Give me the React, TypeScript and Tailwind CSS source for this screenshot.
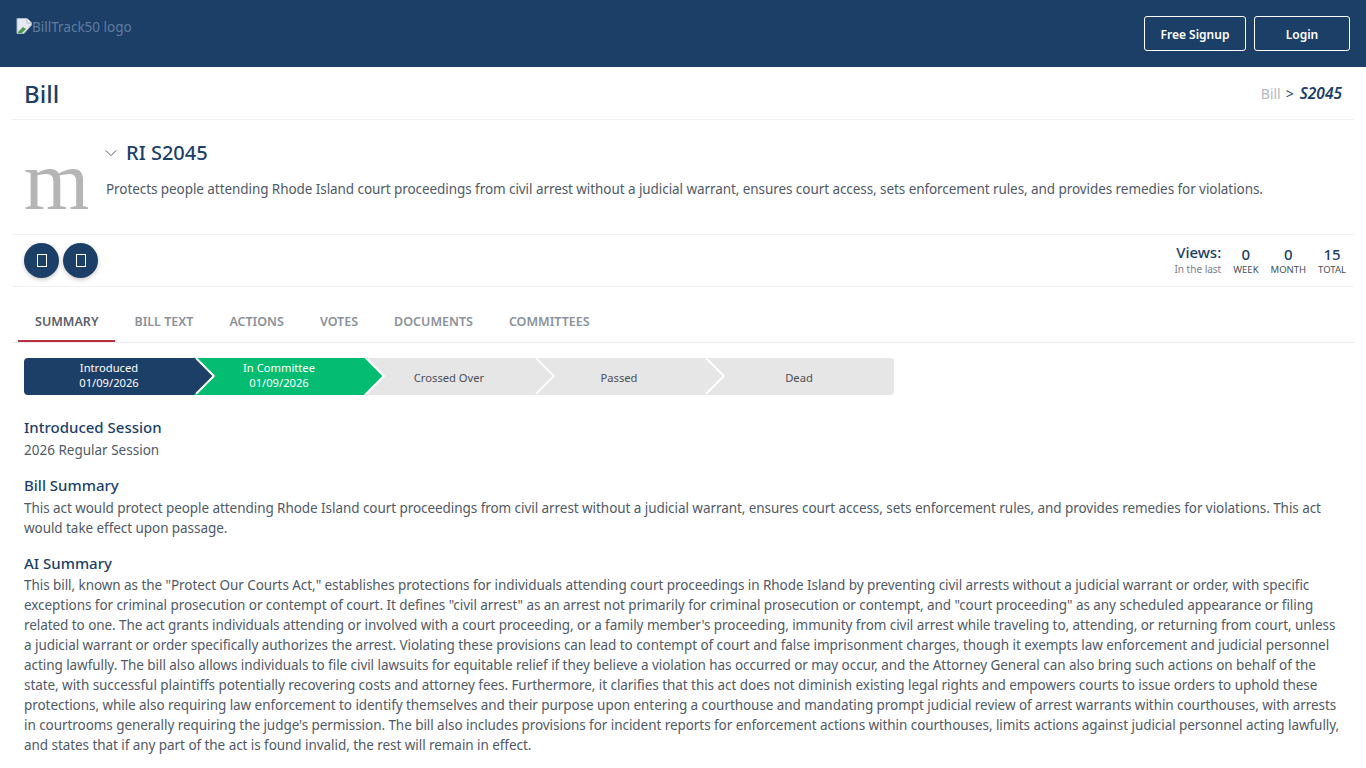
import React from "react";

const NAVY = "text-[#1c3f68]";

const tabs = ["Summary", "Bill Text", "Actions", "Votes", "Documents", "Committees"];

const steps = [
  { label: "Introduced", date: "01/09/2026", cls: "bg-[#1c3f68] text-white", arrow: "bg-[#1c3f68]" },
  { label: "In Committee", date: "01/09/2026", cls: "bg-[#04bd72] text-white", arrow: "bg-[#04bd72]" },
  { label: "Crossed Over", cls: "bg-[#e6e6e6] text-[#4a4f57]", arrow: "bg-[#e6e6e6]" },
  { label: "Passed", cls: "bg-[#e6e6e6] text-[#4a4f57]", arrow: "bg-[#e6e6e6]" },
  { label: "Dead", cls: "bg-[#e6e6e6] text-[#4a4f57] w-[190px] rounded-r-sm" },
];

const BrokenImage = () => (
  <svg width="16" height="16" viewBox="0 0 16 16" className="shrink-0">
    <path d="M1 0.5H11L15.5 5V7L8 15.5H1Z" fill="#e4e9f4" stroke="#a9b4c4" />
    <path d="M2 14L7 9L10 11L6 15H2Z" fill="#4f9a4a" />
    <path d="M11 0.5V5H15.5" fill="#fff" stroke="#a9b4c4" />
  </svg>
);

const Tofu = () => <span className="block w-[10px] h-[13px] border border-white" />;

const Stat = ({ value, label }: { value: string; label: string }) => (
  <div className="flex flex-col items-center">
    <span className={`text-[15px] leading-[18px] font-medium ${NAVY}`}>{value}</span>
    <span className="text-[9.5px] leading-[12px] mt-[1px] text-[#4a4f57]">{label}</span>
  </div>
);

export default function App() {
  return (
    <div className="min-h-screen bg-white text-[#505a67] font-['Noto_Sans',sans-serif] overflow-hidden">
      <header className="h-[67px] bg-[#1c3f68] flex justify-between pl-4 pr-4">
        <div className="flex items-start pt-[18px] gap-0 text-[13.5px] leading-[18px] text-[#5f7c9e]">
          <BrokenImage />
          <span>BillTrack50 logo</span>
        </div>
        <div className="flex items-start gap-2 pt-4">
          <button className="w-[102px] h-[35px] pt-[3px] border border-white rounded-[3px] text-white text-[12px] font-semibold">
            Free Signup
          </button>
          <button className="w-[96px] h-[35px] pt-[3px] border border-white rounded-[3px] text-white text-[12px] font-semibold">
            Login
          </button>
        </div>
      </header>

      <main className="px-3">
        <div className="h-[53px] border-b border-[#f0f0f0] flex items-center justify-between px-3">
          <h1 className={`text-[24px] font-medium pt-[2px] ${NAVY}`}>Bill</h1>
          <div className="text-[14px] flex items-baseline pt-[2px]">
            <span className="text-[#b4b8bd]">Bill</span>
            <span className={`ml-[5px] mr-[6px] ${NAVY}`}>&gt;</span>
            <span className={`italic font-semibold text-[15.5px] ${NAVY}`}>S2045</span>
          </div>
        </div>

        <div className="h-[115px] border-b border-[#f0f0f0] flex px-3">
          <div className="w-[80px] shrink-0 pt-[11px] font-['Liberation_Serif',serif] text-[84px] leading-[100px] text-[#b5b5b5]">
            m
          </div>
          <div className="pt-[18px]">
            <div className="flex items-center gap-[8px] h-[30px]">
              <svg width="14" height="14" viewBox="0 0 16 16" fill="none" stroke="#4a5563" strokeWidth="1.1">
                <path d="M2 5l6 6 6-6" />
              </svg>
              <h2 className={`text-[20px] font-medium ${NAVY}`}>RI S2045</h2>
            </div>
            <p className="text-[13.5px] leading-5 mt-[11px] ml-[2px] tracking-[-0.07px]">
              Protects people attending Rhode Island court proceedings from civil arrest without a judicial warrant, ensures court access, sets enforcement rules, and provides remedies for violations.
            </p>
          </div>
        </div>

        <div className="h-[52px] border-b border-[#f0f0f0] flex items-center justify-between pl-3 pr-2">
          <div className="flex gap-[4px]">
            {[0, 1].map((i) => (
              <div
                key={i}
                className="w-[35px] h-[35px] rounded-full bg-[#1c3f68] flex items-center justify-center shadow-[0_2px_4px_rgba(0,0,0,0.2)]"
              >
                <Tofu />
              </div>
            ))}
          </div>
          <div className="flex items-center gap-[12px]">
            <div className="flex flex-col items-end -mt-[3px]">
              <span className={`text-[15px] leading-[18px] font-medium ${NAVY}`}>Views:</span>
              <span className="text-[10px] leading-[12px] mt-[2px] text-[#7a8088]">In the last</span>
            </div>
            <Stat value="0" label="WEEK" />
            <Stat value="0" label="MONTH" />
            <Stat value="15" label="TOTAL" />
          </div>
        </div>

        <nav className="h-[56px] border-b border-[#e9ecef] flex items-end pl-[6px] gap-[2px]">
          {tabs.map((t, i) => (
            <div
              key={t}
              className={`h-[46px] px-[17px] pt-[17px] pb-0 uppercase text-[12.5px] leading-[18px] font-semibold border-b-2 ${
                i === 0 ? "border-[#b8303f] text-[#5a6068]" : "border-transparent text-[#8b9199]"
              }`}
            >
              {t}
            </div>
          ))}
        </nav>

        <section className="px-3 pt-[15px]">
          <div className="flex">
            {steps.map((s, i) => (
              <div
                key={s.label}
                style={{ zIndex: 10 - i }}
                className={`relative w-[170px] h-[37px] flex flex-col items-center justify-center text-[11.2px] leading-[15px] ${s.cls} ${
                  i === 0 ? "rounded-l-sm" : ""
                }`}
              >
                {s.arrow && (
                  <span
                    className={`absolute -right-[13px] top-[5px] w-[26px] h-[26px] rotate-45 shadow-[2px_-2px_0_0_#fff] ${s.arrow}`}
                  />
                )}
                <span className={`relative ${s.date ? "-mt-[3px]" : "mt-[1px]"}`}>{s.label}</span>
                {s.date && <span className="relative">{s.date}</span>}
              </div>
            ))}
          </div>

          <h3 className={`mt-[22px] text-[15px] leading-[20px] font-medium ${NAVY}`}>Introduced Session</h3>
          <p className="mt-[3px] text-[13.5px] leading-5">2026 Regular Session</p>

          <h3 className={`mt-[15px] text-[15px] leading-[20px] font-medium ${NAVY}`}>Bill Summary</h3>
          <p className="mt-[3px] text-[13.5px] leading-5 tracking-[-0.06px]">
            This act would protect people attending Rhode Island court proceedings from civil arrest without a judicial warrant, ensures court access, sets enforcement rules, and provides remedies for violations. This act would take effect upon passage.
          </p>

          <h3 className={`mt-[15px] text-[15px] leading-[20px] font-medium ${NAVY}`}>AI Summary</h3>
          <p className="mt-[2px] text-[13.5px] leading-5 tracking-[-0.06px]">
            This bill, known as the "Protect Our Courts Act," establishes protections for individuals attending court proceedings in Rhode Island by preventing civil arrests without a judicial warrant or order, with specific exceptions for criminal prosecution or contempt of court. It defines "civil arrest" as an arrest not primarily for criminal prosecution or contempt, and "court proceeding" as any scheduled appearance or filing related to one. The act grants individuals attending or involved with a court proceeding, or a family member's proceeding, immunity from civil arrest while traveling to, attending, or returning from court, unless a judicial warrant or order specifically authorizes the arrest. Violating these provisions can lead to contempt of court and false imprisonment charges, though it exempts law enforcement and judicial personnel acting lawfully. The bill also allows individuals to file civil lawsuits for equitable relief if they believe a violation has occurred or may occur, and the Attorney General can also bring such actions on behalf of the state, with successful plaintiffs potentially recovering costs and attorney fees. Furthermore, it clarifies that this act does not diminish existing legal rights and empowers courts to issue orders to uphold these protections, while also requiring law enforcement to identify themselves and their purpose upon entering a courthouse and mandating prompt judicial review of arrest warrants within courthouses, with arrests in courtrooms generally requiring the judge's permission. The bill also includes provisions for incident reports for enforcement actions within courthouses, limits actions against judicial personnel acting lawfully, and states that if any part of the act is found invalid, the rest will remain in effect.
          </p>
        </section>
      </main>
    </div>
  );
}
